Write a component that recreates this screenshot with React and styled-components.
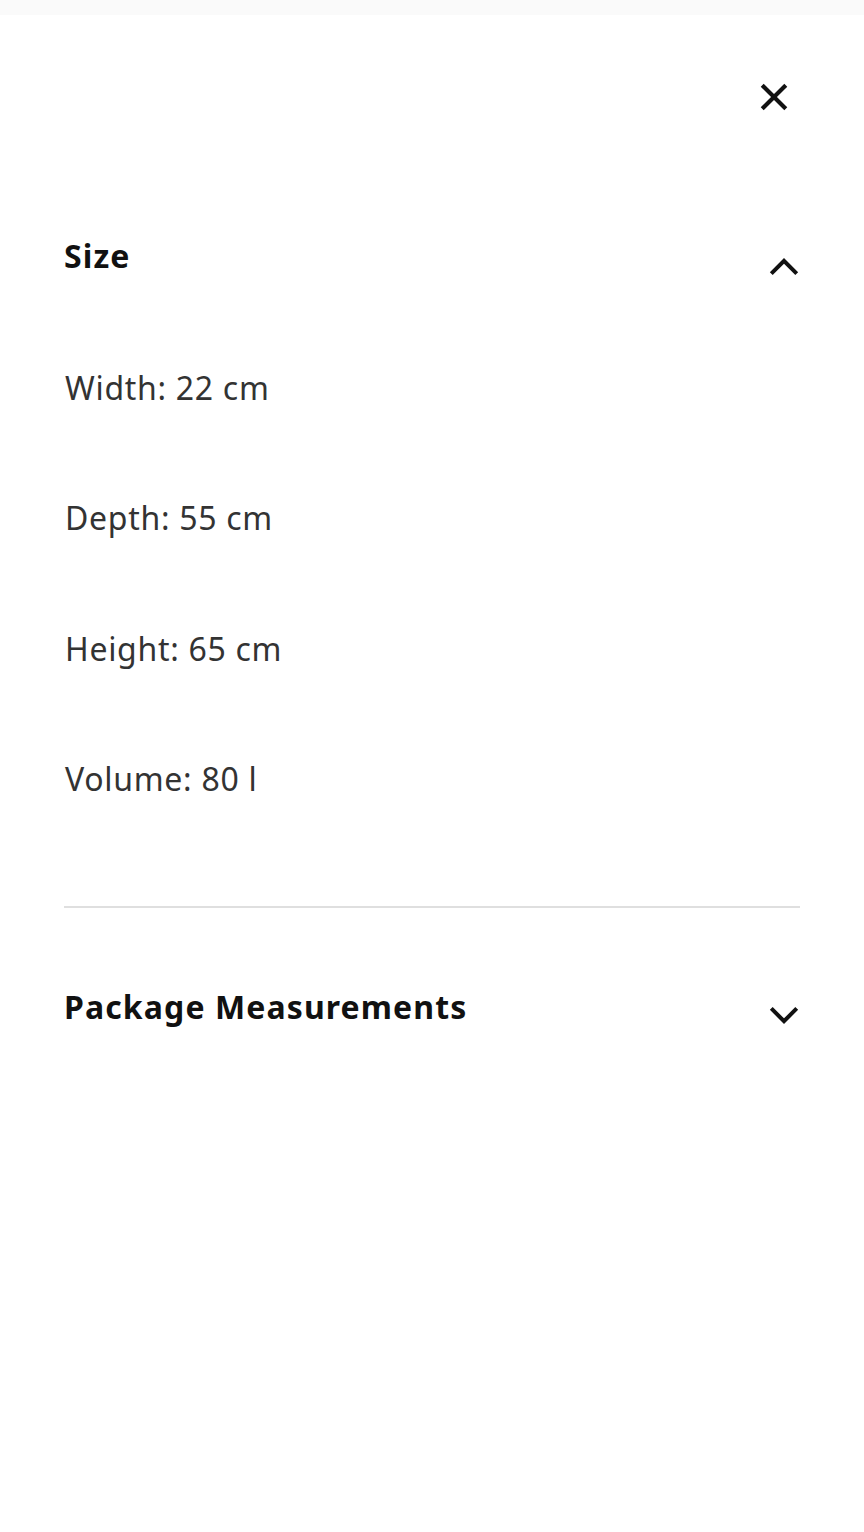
import React from "react";
import styled, { createGlobalStyle } from "styled-components";

const GlobalStyle = createGlobalStyle`
  html, body {
    margin: 0;
    padding: 0;
    background: #ffffff;
  }
  body {
    font-family: "Noto Sans", "Open Sans", sans-serif;
    -webkit-font-smoothing: antialiased;
  }
  * { box-sizing: border-box; }
`;

const Panel = styled.div`
  width: 864px;
  min-height: 1532px;
  background: #ffffff;
  display: flex;
  flex-direction: column;
`;

const TopShade = styled.div`
  height: 15px;
  background: #fafafa;
`;

const Header = styled.header`
  display: flex;
  justify-content: flex-end;
  padding: 56.5px 65.5px 0 0;
`;

const CloseButton = styled.button`
  width: 50px;
  height: 50px;
  padding: 0;
  border: none;
  background: transparent;
  display: flex;
  align-items: center;
  justify-content: center;
  cursor: pointer;
  color: #111111;
  svg { display: block; }
`;

const Content = styled.main`
  padding: 110px 64px 0 64px;
  display: flex;
  flex-direction: column;
`;

const Section = styled.section`
  display: flex;
  flex-direction: column;
`;

const SectionHeader = styled.div`
  display: flex;
  align-items: flex-start;
  justify-content: space-between;
  margin-top: ${(p) => p.$offset || 0}px;
`;

const Title = styled.h2`
  margin: 0;
  font-size: 32px;
  line-height: 48px;
  font-weight: 700;
  color: #111111;
  letter-spacing: 1.1px;
`;

const ChevronBox = styled.span`
  width: 48px;
  height: 48px;
  margin-top: 10px;
  margin-right: -8px;
  color: #111111;
  display: flex;
  svg { display: block; }
`;

const ItemList = styled.ul`
  list-style: none;
  margin: 0;
  padding: 74px 0 0 1px;
  display: flex;
  flex-direction: column;
  gap: 82.6px;
`;

const Item = styled.li`
  font-size: 32px;
  line-height: 48px;
  color: #333333;
  letter-spacing: 0.7px;
`;

const Divider = styled.hr`
  margin: 102.4px 0 0 0;
  border: none;
  height: 2px;
  background: #dfdfdf;
`;

const ChevronUp = () => (
  <svg width="48" height="48" viewBox="0 0 24 24" fill="currentColor" aria-hidden="true">
    <path d="m12.0001 8.0001 7.0711 7.0711-1.4142 1.4142-5.6569-5.6568-5.6568 5.6568-1.4143-1.4142L12.0001 8.0001z" />
  </svg>
);

const ChevronDown = () => (
  <svg width="48" height="48" viewBox="0 0 24 24" fill="currentColor" aria-hidden="true">
    <path d="M12 15.5 4.9289 8.4289l1.4142-1.4142L12 12.6716l5.6569-5.6569 1.4142 1.4142L12 15.5z" />
  </svg>
);

const CloseIcon = () => (
  <svg width="50" height="50" viewBox="0 0 24 24" fill="currentColor" aria-hidden="true">
    <path d="m12 13.4142 4.9498 4.9497 1.4142-1.4142L13.4142 12l4.9498-4.9497-1.4142-1.4142L12 10.5858 7.0503 5.636l-1.4142 1.4142L10.5859 12l-4.9498 4.9497 1.4142 1.4142L12 13.4142z" />
  </svg>
);

const sizes = ["Width: 22 cm", "Depth: 55 cm", "Height: 65 cm", "Volume: 80 l"];

export default function App() {
  return (
    <>
      <GlobalStyle />
      <Panel>
        <TopShade />
        <Header>
          <CloseButton aria-label="Close">
            <CloseIcon />
          </CloseButton>
        </Header>
        <Content>
          <Section>
            <SectionHeader>
              <Title>Size</Title>
              <ChevronBox>
                <ChevronUp />
              </ChevronBox>
            </SectionHeader>
            <ItemList>
              {sizes.map((s) => (
                <Item key={s}>{s}</Item>
              ))}
            </ItemList>
          </Section>
          <Divider />
          <Section>
            <SectionHeader $offset={75.6}>
              <Title>Package Measurements</Title>
              <ChevronBox>
                <ChevronDown />
              </ChevronBox>
            </SectionHeader>
          </Section>
        </Content>
      </Panel>
    </>
  );
}
